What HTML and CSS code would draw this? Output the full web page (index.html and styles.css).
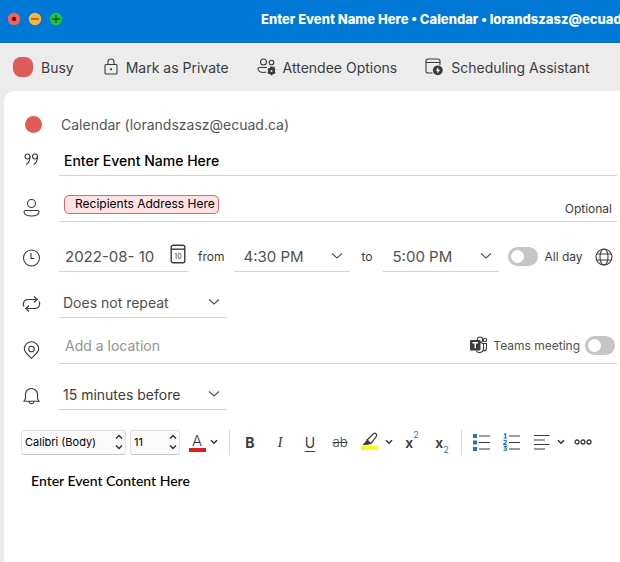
FILE: index.html
```html
<!DOCTYPE html>
<html lang="en">
<head>
<meta charset="utf-8">
<title>Enter Event Name Here • Calendar</title>
<link rel="stylesheet" href="styles.css">
</head>
<body>
<header class="titlebar">
  <div class="lights">
    <button class="light" aria-label="Close"><svg width="14" height="14" viewBox="0 0 14 14"><circle cx="7" cy="7" r="6.2" fill="#f7615c"/><circle cx="7" cy="7" r="2.2" fill="#6b0504"/></svg></button>
    <button class="light" aria-label="Minimize"><svg width="14" height="14" viewBox="0 0 14 14"><circle cx="7" cy="7" r="6.2" fill="#f5b73c"/><path d="M3 7h8" stroke="#8f5a08" stroke-width="1.4"/></svg></button>
    <button class="light" aria-label="Zoom"><svg width="14" height="14" viewBox="0 0 14 14"><circle cx="7" cy="7" r="6.2" fill="#27c13f"/><path d="M3 7h8M7 3v8" stroke="#06600d" stroke-width="1.4"/></svg></button>
  </div>
  <h1 class="title">Enter Event Name Here • Calendar • lorandszasz@ecuad.ca</h1>
</header>

<nav class="actions">
  <button class="action status"><span class="swatch"></span>Busy</button>
  <button class="action private"><svg width="14" height="18" viewBox="0 0 14 18" fill="none" stroke="#3b3b3b" stroke-width="1.1"><rect x="1" y="6.5" width="12" height="9.5" rx="1"/><path d="M4 6.500V4a3 3 0 0 1 6 0v2.500"/><circle cx="7" cy="11.300" r=".6" fill="#3b3b3b"/></svg>Mark as Private</button>
  <button class="action attendee"><svg width="20" height="18" viewBox="0 0 20 18" fill="none" stroke="#3b3b3b" stroke-width="1.1"><circle cx="6.500" cy="4" r="3"/><circle cx="14.500" cy="4.500" r="2.300"/><path d="M10 9.500H2.500c-1 0-1.500.6-1.500 1.300C1 13 3.500 14.500 6.500 14.500c1 0 2-.1 2.800-.4M13 9.200h5"/><circle cx="14.500" cy="13" r="2.300" stroke-width="2.400"/><path d="M14.500 8.800v8.400M10.900 10.900l7.200 4.200M10.900 15.100l7.200-4.200" stroke-width="1.800"/><circle cx="14.500" cy="13" r="1" fill="#ececec" stroke="none"/></svg>Attendee Options</button>
  <button class="action assistant"><svg width="18" height="18" viewBox="0 0 18 18" fill="none" stroke="#3b3b3b" stroke-width="1.1"><path d="M7.500 15H3a2 2 0 0 1-2-2V3a2 2 0 0 1 2-2h10a2 2 0 0 1 2 2v4M1 4.500h14"/><circle cx="12.800" cy="12.300" r="4.900" fill="#3b3b3b" stroke="none"/><path d="M13.300 9.200l-2.600 3.500h1.700v2.700l2.700-3.600h-1.800z" fill="#fff" stroke="none"/></svg>Scheduling Assistant</button>
</nav>

<main class="panel">
  <form class="form">
    <div class="row calendar">
      <span class="icon"><span class="dot"></span></span>
      <span class="account">Calendar (lorandszasz@ecuad.ca)</span>
    </div>

    <div class="row event">
      <label class="icon" for="name" aria-label="Event name"><svg width="24" height="24" viewBox="0 0 24 24" fill="none" stroke="#3b3b3b" stroke-width="1.1"><circle cx="7.500" cy="6.500" r="2.500"/><path d="M10 6.500c0 4-1 6.500-3.800 8"/><circle cx="15" cy="6.500" r="2.500"/><path d="M17.500 6.500c0 4-1 6.500-3.800 8"/></svg></label>
      <div class="field"><input class="text name" id="name" type="text" value="Enter Event Name Here"></div>
    </div>

    <div class="row">
      <span class="icon"><svg width="24" height="24" viewBox="0 0 24 24" fill="none" stroke="#3b3b3b" stroke-width="1.100"><circle cx="11.500" cy="7.500" r="4"/><path d="M5.500 14.500h12c.9 0 1.500.5 1.500 1.300 0 2.700-3.500 4.200-7.500 4.200S4 18.500 4 15.800c0-.8.6-1.300 1.500-1.300z"/></svg></span>
      <div class="field people">
        <span class="chip">Recipients Address Here</span>
        <button type="button" class="optional">Optional</button>
      </div>
    </div>

    <div class="row when">
      <span class="icon"><svg width="24" height="24" viewBox="0 0 24 24" fill="none" stroke="#3b3b3b" stroke-width="1.100"><circle cx="11.500" cy="12" r="8"/><path d="M11 7v5.500h3.500"/></svg></span>
      <div class="times">
        <div class="field date">
          <input class="text" type="text" value="2022-08- 10" aria-label="Date">
          <svg class="datepick" width="16" height="20" viewBox="0 0 16 20" fill="none" stroke="#3b3b3b" stroke-width="1.400"><rect x="1.200" y="1.200" width="13.600" height="17.600" rx="2"/><path d="M1 5.200h14"/><text x="8" y="14.500" class="day">10</text></svg>
        </div>
        <label class="small from" for="start">from</label>
        <div class="field pick time"><select id="start"><option>4:30 PM</option></select><svg class="chev" width="12" height="8" viewBox="0 0 12 8"><path d="M1 1.500l5 4.500 5-4.500"/></svg></div>
        <label class="small to" for="end">to</label>
        <div class="field pick time"><select id="end"><option>5:00 PM</option></select><svg class="chev" width="12" height="8" viewBox="0 0 12 8"><path d="M1 1.500l5 4.500 5-4.500"/></svg></div>
        <label class="small allday"><input class="toggle" type="checkbox">All day</label>
        <button type="button" class="globe" aria-label="Time zone"><svg width="18" height="18" viewBox="0 0 18 18" fill="none" stroke="#3b3b3b" stroke-width="1.100"><circle cx="9" cy="9" r="8"/><ellipse cx="9" cy="9" rx="4" ry="8"/><path d="M1.800 6h14.400M1.800 12h14.400"/></svg></button>
      </div>
    </div>

    <div class="row">
      <label class="icon" for="repeat" aria-label="Repeat"><svg width="24" height="24" viewBox="0 0 24 24" fill="none" stroke="#3b3b3b" stroke-width="1.200"><path d="M3.700 14.500C2.300 10.500 4.500 7.500 8 7.500h9M14 4.500l3.200 3-3.200 3M19.300 9.500c1.400 4-.8 7-4.300 7H6M9 13.500l-3.200 3 3.200 3"/></svg></label>
      <div class="field pick short"><select id="repeat"><option>Does not repeat</option></select><svg class="chev" width="12" height="8" viewBox="0 0 12 8"><path d="M1 1.500l5 4.500 5-4.500"/></svg></div>
    </div>

    <div class="row">
      <label class="icon" for="place" aria-label="Location"><svg width="24" height="24" viewBox="0 0 24 24" fill="none" stroke="#3b3b3b" stroke-width="1.100"><path d="M11.500 20.300C8.500 17.500 4.300 14.500 4.300 10.800a7.200 7 0 0 1 14.400 0c0 3.700-4.200 6.700-7.200 9.500z"/><circle cx="11.500" cy="11" r="2.800"/></svg></label>
      <div class="field location">
        <input class="text" id="place" type="text" placeholder="Add a location">
        <label class="small teams"><svg width="18" height="18" viewBox="0 0 18 18" fill="none" stroke="#3b3b3b" stroke-width="1.100"><circle cx="10" cy="3.700" r="2.700"/><circle cx="15" cy="4" r="1.700"/><path d="M11.500 7.500h5v4.500a3 3 0 0 1-3 3M13.500 7.500v5.500a4 4 0 0 1-7.500 1.500"/><rect x="0" y="4" width="10.500" height="10.500" rx="1" fill="#3b3b3b" stroke="none"/><path d="M2.500 6.800h5.500M5.250 6.800v5.500" stroke="#fff" stroke-width="1.500"/></svg>Teams meeting<input class="toggle" type="checkbox"></label>
      </div>
    </div>

    <div class="row">
      <label class="icon" for="alert" aria-label="Reminder"><svg width="24" height="24" viewBox="0 0 24 24" fill="none" stroke="#3b3b3b" stroke-width="1.100"><path d="M5.500 14.500v-4a6 6 0 0 1 12 0v4L19 17.300H4zM9 17.500c.3 1.600 1.200 2.300 2.500 2.300s2.200-.7 2.500-2.300"/></svg></label>
      <div class="field pick short dark"><select id="alert"><option>15 minutes before</option></select><svg class="chev" width="12" height="8" viewBox="0 0 12 8"><path d="M1 1.500l5 4.500 5-4.500"/></svg></div>
    </div>
  </form>

  <div class="format">
    <div class="combo family"><select aria-label="Font"><option>Calibri (Body)</option></select><svg class="updown" width="8" height="16" viewBox="0 0 8 16"><path d="M1 4.500l3-3 3 3M1 11.500l3 3 3-3"/></svg></div>
    <div class="combo size"><select aria-label="Font size"><option>11</option></select><svg class="updown" width="8" height="16" viewBox="0 0 8 16"><path d="M1 4.500l3-3 3 3M1 11.500l3 3 3-3"/></svg></div>
    <button class="tool color" aria-label="Font color"><span class="letter">A</span></button>
    <button class="drop" aria-label="Font color choices"><svg width="8" height="6" viewBox="0 0 8 6"><path d="M1 1.200l3 3 3-3"/></svg></button>
    <span class="rule"></span>
    <button class="tool bold">B</button>
    <button class="tool italic">I</button>
    <button class="tool under">U</button>
    <button class="tool strike">ab</button>
    <button class="tool" aria-label="Highlight"><svg width="18" height="20" viewBox="0 0 18 20" fill="none" stroke="#3b3b3b" stroke-width="1.200"><rect x="0" y="14" width="17" height="4" fill="#fcf81c" stroke="none"/><path d="M6 8l6.500-6.300q1.500-1 2.600.1t.2 2.500L10 11.500z"/><path d="M5.800 8l4 3.700-2.600 1-5.700.5z" fill="#3b3b3b" stroke="none"/></svg></button>
    <button class="drop near" aria-label="Highlight choices"><svg width="8" height="6" viewBox="0 0 8 6"><path d="M1 1.200l3 3 3-3"/></svg></button>
    <button class="tool script">x<sup>2</sup></button>
    <button class="tool script">x<sub>2</sub></button>
    <span class="rule tight"></span>
    <button class="tool" aria-label="Bulleted list"><svg width="18" height="18" viewBox="0 0 18 18"><path d="M0 1h4v4H0zM0 7.500h4v4H0zM0 14h4v4H0z" fill="#1f78ae"/><path d="M6 3h11M6 9.500h11M6 16h11" stroke="#3b3b3b" stroke-width="1.200"/></svg></button>
    <button class="tool" aria-label="Numbered list"><svg width="18" height="18" viewBox="0 0 18 18"><path d="M1 1.700l1.500-1v4.300M.5 5h3.500M.6 7.600q2.800-1 2.800.7 0 1-2.800 3h3.200M.6 13.400h2.900l-1.500 1.600q1.700 0 1.700 1.200 0 1.500-3.100 1" fill="none" stroke="#1f78ae" stroke-width="1.200"/><path d="M6 3h11M6 9.500h11M6 16h11" stroke="#3b3b3b" stroke-width="1.200"/></svg></button>
    <button class="tool" aria-label="Align"><svg width="16" height="18" viewBox="0 0 16 18"><path d="M0 2.500h15.500M0 7h11M0 11.500h15.500M0 16h11" stroke="#3b3b3b" stroke-width="1.200"/></svg></button>
    <button class="drop" aria-label="Align choices"><svg width="8" height="6" viewBox="0 0 8 6"><path d="M1 1.200l3 3 3-3"/></svg></button>
    <button class="tool more" aria-label="More"><svg width="18" height="6" viewBox="0 0 18 6" fill="none" stroke="#3b3b3b" stroke-width="1.300"><circle cx="3" cy="3" r="2"/><circle cx="9" cy="3" r="2"/><circle cx="15" cy="3" r="2"/></svg></button>
  </div>

  <textarea class="content" aria-label="Event content">Enter Event Content Here</textarea>
</main>
</body>
</html>
```
FILE: styles.css
```css
* { box-sizing: border-box; }

body {
  margin: 0;
  min-height: 100vh;
  display: flex;
  flex-direction: column;
  overflow-x: hidden;
  background: #ececec;
  color: #3b3b3b;
  font-family: Inter, "Liberation Sans", sans-serif;
  font-size: 15px;
}

button, input, select, textarea {
  font: inherit;
  color: inherit;
  background: none;
  border: 0;
  padding: 0;
  margin: 0;
  outline: 0;
}

svg { display: block; flex: none; }

/* Title bar */
.titlebar {
  display: flex;
  align-items: center;
  height: 43px;
  padding: 0 0 4px 7px;
  background: #0078d6;
  border-bottom: 1px solid #1a6cb5;
  overflow: hidden;
}
.lights { display: flex; gap: 7px; flex: none; }
.light { display: flex; }
.title {
  margin: 0 0 0 198px;
  color: #fff;
  font-size: 13px;
  font-weight: 800;
  white-space: nowrap;
}

/* Event actions */
.actions {
  display: flex;
  align-items: center;
  height: 48px;
  padding-left: 13px;
  gap: 28px;
  font-size: 14px;
}
.action {
  display: flex;
  align-items: center;
  gap: 8px;
  white-space: nowrap;
}
.private { padding-left: 2px; }
.attendee { gap: 6px; }
.swatch {
  width: 20px;
  height: 20px;
  border-radius: 8px;
  background: #dd5b59;
}

/* Form */
.panel {
  flex: 1;
  display: flex;
  flex-direction: column;
  margin-left: 4px;
  padding: 15px 3px 0 16px;
  background: #fff;
  border-top-left-radius: 10px;
}
.row {
  display: grid;
  grid-template-columns: 39px minmax(0, 1fr);
  align-items: end;
  min-height: 46px;
}
.row.calendar { min-height: 36px; align-items: center; }
.row.event { min-height: 34px; }
.row.when { min-height: 50px; }
.icon {
  display: flex;
  height: 26px;
}
.calendar .icon { align-items: center; }
.dot {
  width: 17px;
  height: 17px;
  margin-left: 5px;
  border-radius: 50%;
  background: #e05a5a;
}
.account { padding-left: 2px; color: #555; font-size: 14px; }

.field {
  display: flex;
  align-items: center;
  height: 31px;
  border-bottom: 1px solid #d4d4d4;
  color: #505050;
}
.text {
  flex: 1;
  min-width: 0;
  padding-left: 6px;
}
.text::placeholder { color: #949494; opacity: 1; }
.name { color: #000; padding-left: 5px; font-size: 14px; font-weight: 500; }

.people { justify-content: space-between; }
.chip {
  height: 19px;
  margin: 0 0 4px 5px;
  padding: 0 3px 0 10px;
  border: 1px solid #e06666;
  border-radius: 5px;
  background: #fde3e5;
  color: #000;
  font-size: 12px;
  line-height: 16px;
}
.optional {
  align-self: flex-end;
  padding: 0 5px 5px 0;
  color: #3b3b3b;
  font-size: 12px;
}

.times { display: flex; align-items: center; }
.date { flex: 0 1 129px; min-width: 0; }
.datepick { margin: 0 2px 4px 0; }
.day { font-size: 7px; text-anchor: middle; fill: #3b3b3b; stroke: none; }
.small {
  display: flex;
  align-items: center;
  font-size: 12px;
  white-space: nowrap;
}
.from { padding: 0 10px; }
.to { padding: 0 11px; }
.time { flex: 0 1 116px; }
.allday { gap: 6px; margin-left: 9px; }
.globe { margin: 0 4px 0 auto; }

.pick { display: grid; align-items: center; }
.pick select {
  grid-area: 1 / 1;
  appearance: none;
  width: 100%;
  padding-left: 4px;
}
.time select { padding-left: 9px; }
.chev {
  grid-area: 1 / 1;
  justify-self: end;
  margin-right: 7px;
  pointer-events: none;
}
.chev path { fill: none; stroke: #505050; stroke-width: 1.1; }
.short { width: 168px; font-size: 14px; }
.dark { color: #3b3b3b; }

.location { height: 37px; font-size: 14px; }
.teams { gap: 5px; margin-right: 2px; }

.toggle {
  appearance: none;
  display: flex;
  align-items: center;
  width: 30px;
  height: 19px;
  padding: 0 3px;
  border-radius: 10px;
  background: #c5c5c5;
}
.toggle::before {
  content: "";
  width: 13px;
  height: 13px;
  border-radius: 50%;
  background: #fff;
}
.toggle:checked::before { margin-left: auto; }

/* Formatting bar */
.format {
  display: flex;
  align-items: center;
  height: 26px;
  margin: 19px 0 0 1px;
}
.combo {
  display: grid;
  align-items: center;
  height: 25px;
  margin-right: 4px;
  border: 1px solid #e2e2e2;
  border-bottom-color: #c8c8c8;
  border-radius: 3px;
  background: #fafafa;
  color: #000;
  font-size: 11px;
}
.combo select {
  grid-area: 1 / 1;
  appearance: none;
  width: 100%;
  padding-left: 3px;
}
.family { width: 105px; }
.size { width: 50px; }
.updown {
  grid-area: 1 / 1;
  justify-self: end;
  margin-right: 2px;
  pointer-events: none;
}
.updown path, .drop path { fill: none; stroke: #333; stroke-width: 1.5; }
.tool {
  display: flex;
  align-items: center;
  justify-content: center;
  width: 30px;
  height: 26px;
  flex: none;
}
.drop { display: flex; width: 8px; flex: none; }
.color { width: 26px; }
.letter {
  width: 17px;
  border-bottom: 4px solid #d81e1e;
  font-weight: 300;
  line-height: 15px;
  text-align: center;
}
.rule {
  width: 1px;
  height: 25px;
  margin: 0 5px 0 11px;
  background: #d8d8d8;
}
.tight { margin-left: 4px; }
.bold { font-weight: 700; font-size: 14px; }
.italic { font-family: "Liberation Serif", serif; font-style: italic; }
.under { font-size: 14px; text-decoration: underline; text-underline-offset: 3px; }
.strike { font-size: 13px; font-weight: 300; text-decoration: line-through; }
.near { margin-right: 4px; }
.script { font-size: 14px; font-weight: 600; }
.script sup, .script sub {
  color: #1f78ae;
  font-size: 9px;
  font-weight: 400;
}
.script sup { align-self: flex-start; }
.script sub { align-self: flex-end; }
.more { margin-left: 3px; }

.content {
  flex: 1;
  resize: none;
  margin: 16px 0 0 11px;
  color: #000;
  font-family: Lato, "Liberation Sans", sans-serif;
  font-size: 14px;
  font-weight: 500;
  line-height: 20px;
}
```
